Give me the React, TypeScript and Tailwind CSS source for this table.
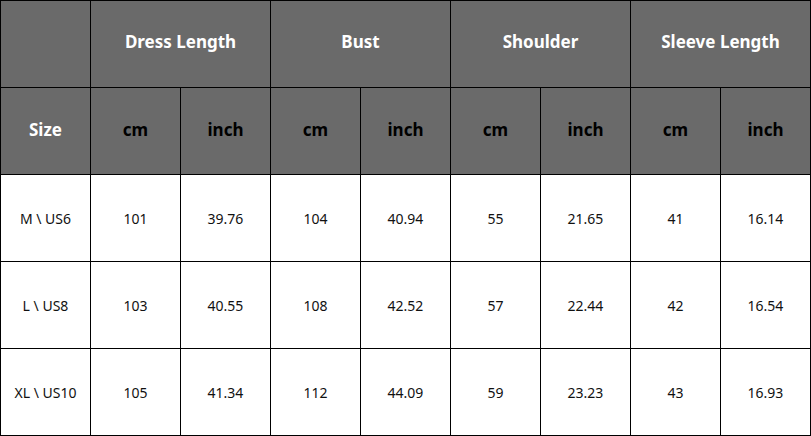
import { Fragment } from "react";

const groups = ["Dress Length", "Bust", "Shoulder", "Sleeve Length"];

const rows = [
  ["M \\ US6", "101", "39.76", "104", "40.94", "55", "21.65", "41", "16.14"],
  ["L \\ US8", "103", "40.55", "108", "42.52", "57", "22.44", "42", "16.54"],
  ["XL \\ US10", "105", "41.34", "112", "44.09", "59", "23.23", "43", "16.93"],
];

export default function App() {
  return (
    <div
      className="grid w-[811px] h-[436px] grid-cols-[repeat(9,89px)] grid-rows-[repeat(5,86px)] gap-px p-px bg-black"
      style={{ fontFamily: '"Noto Sans", "Open Sans", sans-serif' }}
    >
      {/* header row 1 */}
      <div className="bg-[#6a6a6a]" />
      {groups.map((g) => (
        <div
          key={g}
          className="col-span-2 flex items-center justify-center bg-[#6a6a6a] text-white font-bold text-[17px] pb-1"
        >
          {g}
        </div>
      ))}

      {/* header row 2 */}
      <div className="flex items-center justify-center bg-[#6a6a6a] text-white font-bold text-[17px] pb-0.5">
        Size
      </div>
      {groups.map((g) => (
        <Fragment key={g}>
          <div className="flex items-center justify-center bg-[#6a6a6a] text-black font-bold text-[17px] pb-0.5">
            cm
          </div>
          <div className="flex items-center justify-center bg-[#6a6a6a] text-black font-bold text-[17px] pb-0.5">
            inch
          </div>
        </Fragment>
      ))}

      {/* data rows */}
      {rows.map((r) =>
        r.map((v, i) => (
          <div
            key={r[0] + i}
            className="flex items-center justify-center bg-white text-[#111] text-[14px]"
          >
            {v}
          </div>
        ))
      )}
    </div>
  );
}
